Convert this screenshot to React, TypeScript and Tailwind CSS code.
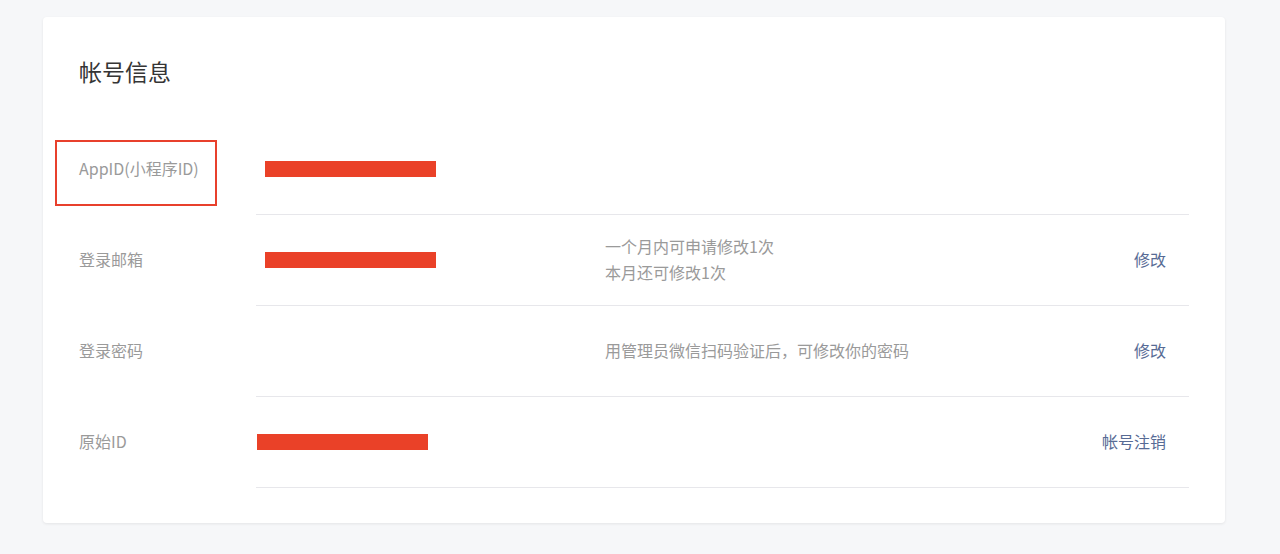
const font = "font-['PingFang_SC','Noto_Sans_CJK_SC',sans-serif]";

type Row = {
  label: string;
  bar?: { offset: string };
  desc?: string[];
  action?: string;
  highlight?: boolean;
};

const rows: Row[] = [
  { label: "AppID(小程序ID)", bar: { offset: "ml-[9px]" }, highlight: true },
  { label: "登录邮箱", bar: { offset: "ml-[9px]" }, desc: ["一个月内可申请修改1次", "本月还可修改1次"], action: "修改" },
  { label: "登录密码", desc: ["用管理员微信扫码验证后，可修改你的密码"], action: "修改" },
  { label: "原始ID", bar: { offset: "ml-[1px]" }, action: "帐号注销" },
];

export default function App() {
  return (
    <div className={`min-h-[554px] bg-[#f6f7f9] pl-[43px] pt-[17px] ${font}`}>
      <section className="w-[1182px] rounded-[4px] bg-white px-[36px] pb-[35px] pt-[38px] shadow-[0_1px_3px_rgba(0,0,0,0.08)]">
        <h2 className="text-[23px] leading-[32px] text-[#353535]">帐号信息</h2>
        <div className="mt-[37px]">
          {rows.map((row) => (
            <div key={row.label} className="relative flex h-[91px]">
              {row.highlight && (
                <div className="pointer-events-none absolute left-[-24px] top-[16px] h-[66px] w-[162px] border-2 border-[#e8402c]" />
              )}
              <div className="flex w-[177px] shrink-0 items-center pb-[3px] text-[16px] text-[#9a9a9a]">{row.label}</div>
              <div className="flex flex-1 items-center border-b border-[#e7e7eb]">
                <div className="flex w-[349px] shrink-0 items-center">
                  {row.bar && <span className={`block h-[16px] w-[171px] bg-[#ea4128] ${row.bar.offset}`} />}
                </div>
                <div className="flex-1 pb-[3px] text-[16px] leading-[26px] text-[#9a9a9a]">
                  {row.desc?.map((line) => (
                    <p key={line}>{line}</p>
                  ))}
                </div>
                {row.action && (
                  <a className="pb-[3px] pr-[23px] text-[16px] text-[#576b95]" href="#">
                    {row.action}
                  </a>
                )}
              </div>
            </div>
          ))}
        </div>
      </section>
    </div>
  );
}
